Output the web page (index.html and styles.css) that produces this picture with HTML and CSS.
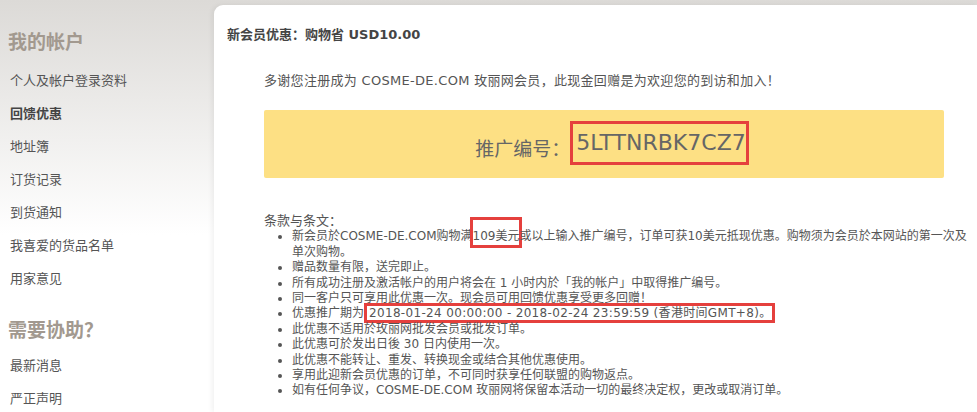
FILE: index.html
```html
<!DOCTYPE html>
<html lang="zh-CN">
<head>
    <meta charset="UTF-8">
    <meta name="viewport" content="width=device-width, initial-scale=1.0">
    <title>回馈优惠</title>
    <link rel="stylesheet" href="styles.css">
</head>
<body>
    <div class="page">
        <div class="sidebar">
            <h2>我的帐户</h2>
            <ul class="menu">
                <li><a href="#">个人及帐户登录资料</a></li>
                <li class="active"><a href="#">回馈优惠</a></li>
                <li><a href="#">地址簿</a></li>
                <li><a href="#">订货记录</a></li>
                <li><a href="#">到货通知</a></li>
                <li><a href="#">我喜爱的货品名单</a></li>
                <li><a href="#">用家意见</a></li>
            </ul>
            <h2 class="help">需要协助？</h2>
            <ul class="menu">
                <li><a href="#">最新消息</a></li>
                <li><a href="#">严正声明</a></li>
            </ul>
        </div>

        <div class="main">
            <h3 class="title">新会员优惠：购物省 <b>USD10.00</b></h3>
            <div class="content">
                <p class="intro">多谢您注册成为 COSME-DE.COM 玫丽网会员，此现金回赠是为欢迎您的到访和加入！</p>
                <div class="promo">
                    <span class="label">推广编号：</span><span class="code">5LTTNRBK7CZ7</span>
                </div>
                <div class="terms">
                    <p>条款与条文：</p>
                    <ul>
                        <li>新会员於COSME-DE.COM购物满<span class="mark">109美元</span>或以上输入推广编号，订单可获10美元抵现优惠。购物须为会员於本网站的第一次及单次购物。</li>
                        <li>赠品数量有限，送完即止。</li>
                        <li>所有成功注册及激活帐户的用户将会在 1 小时内於「我的帐户」中取得推广编号。</li>
                        <li>同一客户只可享用此优惠一次。现会员可用回馈优惠享受更多回赠！</li>
                        <li>优惠推广期为<span class="mark-date">2018-01-24 00:00:00 - 2018-02-24 23:59:59 (香港时间GMT+8)。</span></li>
                        <li>此优惠不适用於玫丽网批发会员或批发订单。</li>
                        <li>此优惠可於发出日後 30 日内使用一次。</li>
                        <li>此优惠不能转让、重发、转换现金或结合其他优惠使用。</li>
                        <li>享用此迎新会员优惠的订单，不可同时获享任何联盟的购物返点。</li>
                        <li>如有任何争议，COSME-DE.COM 玫丽网将保留本活动一切的最终决定权，更改或取消订单。</li>
                    </ul>
                </div>
            </div>
        </div>
    </div>
</body>
</html>
```

FILE: styles.css
```css
body {
    margin: 0;
    font-family: "DejaVu Sans", "Noto Sans CJK SC", sans-serif;
    color: #555;
    background: #fff linear-gradient(#dcdad7 0, #fff 235px) no-repeat;
    overflow: hidden;
}

.page {
    display: flex;
    height: 412px;
}

.sidebar {
    width: 206px;
    padding-left: 8px;
    flex-shrink: 0;
}

.sidebar h2 {
    margin: 30px 0 10px;
    font-size: 19px;
    line-height: 24px;
    color: #a2998f;
    font-weight: bold;
}

.sidebar h2.help {
    margin-top: 23px;
    margin-bottom: 7px;
}

.menu {
    list-style: none;
    margin: 0;
    padding: 0 0 0 2px;
}

.menu li {
    font-size: 13px;
    line-height: 33px;
}

.menu a {
    color: #555;
    text-decoration: none;
}

.menu li.active a {
    font-weight: bold;
    color: #444;
}

.main {
    flex: 1;
    margin-top: 5px;
    background: #fff;
    border-top-left-radius: 9px;
    box-shadow: -2px 0 5px rgba(0, 0, 0, 0.06);
    padding: 0 33px 0 13px;
}

.title {
    margin: 21px 0 0;
    font-size: 13px;
    line-height: 18px;
    color: #444;
    font-weight: bold;
}

.content {
    margin-left: 37px;
}

.intro {
    margin: 28px 0 0;
    font-size: 13px;
    line-height: 18px;
    letter-spacing: 0.3px;
}

.promo {
    margin-top: 20px;
    height: 68px;
    background: #fde084;
    border-radius: 2px;
    display: flex;
    align-items: center;
    justify-content: center;
    color: #666;
    padding-left: 16px;
}

.promo .label {
    font-size: 19px;
    margin-top: 6px;
}

.code {
    font-size: 22px;
    padding: 6px 0 6px 3px;
    border: 3px solid #e5403d;
    line-height: 26px;
    margin-bottom: 2px;
}

.terms {
    margin-top: 35px;
    font-size: 12px;
    line-height: 15.4px;
}

.terms p {
    margin: 0;
    font-size: 13px;
}

.terms ul {
    margin: 1px -26px 0 0;
    padding-left: 28px;
}

.mark {
    margin: 0 -3px;
    padding: 9px 0 2px;
    border: 3px solid #e5403d;
}

.mark-date {
    padding: 0 0 0 2px;
    border: 3px solid #e5403d;
    letter-spacing: 0.33px;
}
```
